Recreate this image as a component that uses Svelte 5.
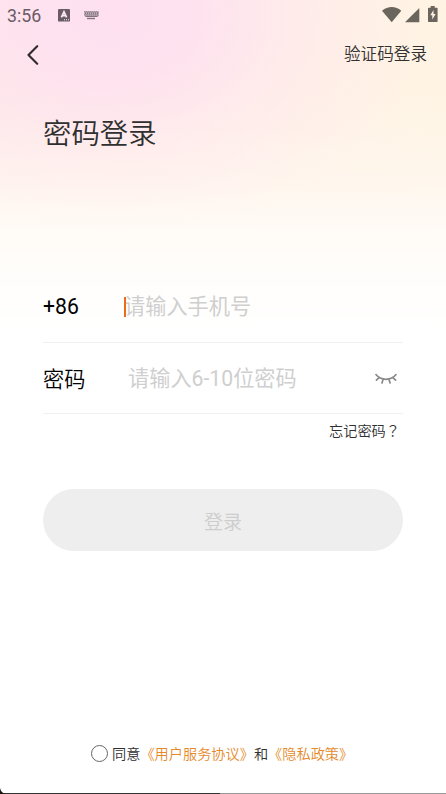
<script lang="ts">
    let phone = "";
    let password = "";
    let agreed = false;

    const keys = [0, 1, 2, 3, 4, 5, 6];
</script>

<main>
    <header class="status">
        <span class="time">3:56</span>
        <svg class="ime" width="12" height="13" viewBox="0 0 12 13">
            <rect width="12" height="12.6" rx="1.2" fill="#6b5b66" />
            <path d="M3.4 8.3 6 2.7l2.6 5.6M4.2 6.7h3.6" fill="none" stroke="#ffeaf4" stroke-width="1.7" />
            <path d="M6 10.8h1M8 10.8h1M10 10.8h1" stroke="#ffeaf4" />
        </svg>
        <svg class="keyboard" width="15" height="9" viewBox="0 0 15 9">
            <path d="M0 0h15v4.5L13.5 6h-12L0 4.5z" fill="#c4b2bd" />
            <g fill="none" stroke="#84727d" stroke-width="1">
                {#each keys as k}
                    <path d="M{k * 2 + 0.5} 0.3l1.5 1.5-1 1.5 1 1.5" />
                {/each}
                <path d="M1.5 5.5h12" />
                <path d="M3 7.5h8" stroke-width="1.4" />
            </g>
        </svg>
        <span class="space"></span>
        <svg class="wifi" width="20" height="16" viewBox="0 0 20 16">
            <path d="M0 3.7Q4.5 0 9.7 0t9.6 3.7L9.7 15.3z" fill="#6b665d" />
        </svg>
        <svg class="signal" width="15" height="15" viewBox="0 0 15 15">
            <path d="M14.3 0v14.3H0z" fill="#6b665d" />
        </svg>
        <svg class="battery" width="10" height="16" viewBox="0 0 10 16">
            <path d="M2.7 0h4v1.7H9q.6 0 .6.6v13q0 .6-.6.6H.6q-.6 0-.6-.6v-13q0-.6.6-.6h2.1z" fill="#6b665d" />
            <path d="M5.5 4 2.3 9.3h2v4.2l3.3-5.6h-2z" fill="#fff3e4" />
        </svg>
    </header>

    <nav>
        <button class="back" aria-label="返回">
            <svg width="12" height="20" viewBox="0 0 12 20">
                <path d="M10.2 1.2 1.5 10l8.7 8.8" fill="none" stroke="#2f2b2d" stroke-width="2.1" stroke-linecap="round" stroke-linejoin="round" />
            </svg>
        </button>
        <button class="switch">验证码登录</button>
    </nav>

    <h1>密码登录</h1>

    <form>
        <div class="row">
            <label for="phone" class="code">+86</label>
            <div class="field phone">
                <span class="caret"></span>
                <input id="phone" type="tel" placeholder="请输入手机号" bind:value={phone} />
            </div>
        </div>
        <div class="row second">
            <label for="password">密码</label>
            <div class="field">
                <input id="password" type="password" placeholder="请输入6-10位密码" bind:value={password} />
            </div>
            <svg class="eye" width="22" height="12" viewBox="0 0 22 12">
                <g fill="none" stroke="#8a8a8a" stroke-width="1.7" stroke-linecap="round">
                    <path d="M1 1.6Q4.6 6.3 11 6.3t10-4.7" />
                    <path d="M4.1 4.7 1.4 7.2M8.1 6.2 7 10M13.9 6.2l1.2 3.8M17.8 4.7l2.8 2.5" />
                </g>
            </svg>
        </div>
        <button type="button" class="forgot">忘记密码<span class="mark">？</span></button>
        <button type="button" class="submit">登录</button>
    </form>

    <footer>
        <button class="radio" class:agreed aria-label="同意" on:click={() => (agreed = !agreed)}></button>
        <span>同意<b>《用户服务协议》</b>和<b>《隐私政策》</b></span>
    </footer>
    <div class="edge"></div>
</main>

<style>
    :global(body) {
        background: #fff;
    }

    main {
        position: relative;
        display: flex;
        flex-direction: column;
        box-sizing: border-box;
        width: 446px;
        height: 794px;
        overflow: hidden;
        font-family: Roboto, "Noto Sans CJK SC", sans-serif;
        font-weight: 350;
        color: #303030;
        background:
            linear-gradient(to bottom, rgba(255, 255, 255, 0) 120px, rgba(255, 255, 255, 0.15) 185px, rgba(255, 255, 255, 0.55) 235px, rgba(255, 255, 255, 0.82) 280px, #fff 330px),
            radial-gradient(ellipse 310px 220px at 115px 15px, #fee0f0 0%, rgba(254, 224, 240, 0.85) 25%, rgba(254, 227, 238, 0.45) 58%, rgba(254, 236, 232, 0) 100%),
            linear-gradient(to bottom, rgba(255, 246, 236, 0) 90px, #fff6ec 215px),
            linear-gradient(to right, #feebe9 0, #fff1e9 220px, #fff4e3 446px);
    }

    button {
        padding: 0;
        border: 0;
        background: none;
        font-family: inherit;
        font-weight: inherit;
        color: inherit;
    }

    .status {
        display: flex;
        align-items: flex-start;
        height: 30px;
        padding: 0 8px 0 7px;
    }

    .time {
        width: 51px;
        font-size: 17.8px;
        font-weight: 400;
        line-height: 32px;
        color: #6b5b66;
    }

    .ime {
        margin-top: 9px;
    }

    .keyboard {
        margin: 11px 0 0 14px;
    }

    .space {
        flex: 1;
    }

    .wifi {
        margin-top: 7px;
    }

    .signal {
        margin: 8px 0 0 3px;
    }

    .battery {
        margin: 6px 0 0 8px;
    }

    nav {
        display: flex;
        justify-content: space-between;
        align-items: center;
        height: 48px;
        padding: 0 19px 0 27px;
    }

    .back {
        display: flex;
        margin-top: 2px;
    }

    .switch {
        margin-top: 2px;
        font-size: 16.6px;
        line-height: 24px;
    }

    h1 {
        margin: 36px 0 0 43px;
        font-size: 28.4px;
        font-weight: inherit;
        line-height: 42px;
    }

    form {
        display: flex;
        flex-direction: column;
        margin: 115px 43px 0;
    }

    .row {
        display: flex;
        align-items: center;
        box-sizing: border-box;
        height: 72px;
        border-bottom: 1px solid #f1f1f1;
        font-size: 21.2px;
    }

    .second {
        height: 71px;
    }

    label {
        width: 85px;
        color: #000;
    }

    .code {
        font-weight: 400;
    }

    .second label {
        margin-top: -1px;
    }

    .field {
        position: relative;
        flex: 1;
    }

    .phone {
        margin-left: -4px;
    }

    .caret {
        position: absolute;
        left: 0;
        top: 5px;
        width: 2px;
        height: 20px;
        background: #ec6a1c;
    }

    input {
        display: block;
        width: 100%;
        height: 30px;
        padding: 0;
        border: 0;
        outline: 0;
        background: none;
        font: inherit;
        font-weight: 400;
    }

    input::placeholder {
        color: #cfcfcf;
        opacity: 1;
    }

    .eye {
        margin: 1px 6px 0 0;
    }

    .forgot {
        align-self: flex-end;
        height: 22px;
        margin: 6px 3px 0 0;
        font-size: 14.2px;
        line-height: 21px;
    }

    .mark {
        font-family: "Noto Sans CJK TC", sans-serif;
        line-height: 1;
    }

    .submit {
        height: 62px;
        margin-top: 47px;
        border-radius: 31px;
        background: #eee;
        font-size: 19px;
        color: #cdcdcd;
    }

    footer {
        display: flex;
        align-items: center;
        height: 24px;
        margin: auto 0 28px 91px;
        font-size: 14.2px;
    }

    .radio {
        box-sizing: border-box;
        width: 17px;
        height: 17px;
        margin-right: 4px;
        border: 1.5px solid #666;
        border-radius: 50%;
    }

    .agreed {
        background: #e58a2b;
    }

    b {
        font-weight: inherit;
        color: #e58a2b;
    }

    .edge {
        flex: none;
        height: 1px;
        background: linear-gradient(to right, #333 220px, #999 220px);
    }

    main::after {
        content: "";
        position: absolute;
        left: 0;
        bottom: 0;
        width: 7px;
        height: 7px;
        background: radial-gradient(circle at 7px 0, transparent 6.5px, #1d1611 7.5px);
    }
</style>
